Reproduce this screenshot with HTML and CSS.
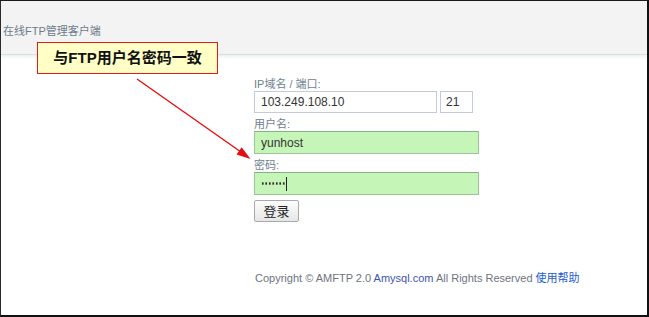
FILE: index.html
```html
<!DOCTYPE html>
<html lang="zh-CN">
<head>
    <meta charset="UTF-8">
    <meta name="viewport" content="width=device-width, initial-scale=1.0">
    <title>在线FTP管理客户端</title>
    <link rel="stylesheet" href="styles.css">
</head>
<body>
    <div class="frame">
        <div class="header">在线FTP管理客户端</div>

        <div class="login">
            <label class="field-label" for="host">IP域名 / 端口:</label>
            <div class="host-row">
                <input type="text" id="host" class="input input-host" value="103.249.108.10">
                <input type="text" id="port" class="input input-port" value="21">
            </div>
            <label class="field-label" for="user">用户名:</label>
            <input type="text" id="user" class="input input-fill" value="yunhost">
            <label class="field-label" for="pass">密码:</label>
            <div class="input input-fill input-pass"><span class="dots"></span><span class="caret"></span></div>
            <button class="btn-login">登录</button>
        </div>

        <div class="footer">
            Copyright © AMFTP 2.0 <a href="#">Amysql.com</a> All Rights Reserved <a href="#" class="help">使用帮助</a>
        </div>

        <!-- annotation -->
        <div class="callout">与FTP用户名密码一致</div>
        <svg class="arrow" width="649" height="317" viewBox="0 0 649 317">
            <line x1="137" y1="79" x2="241" y2="152" stroke="#e01010" stroke-width="1.4"/>
            <polygon points="250.5,159 236.5,154.6 241.7,147.2" fill="#e01010"/>
        </svg>
    </div>
</body>
</html>
```

FILE: styles.css
```css
* {
    box-sizing: border-box;
}

body {
    margin: 0;
    font-family: "Liberation Sans", Arial, "Noto Sans CJK SC", sans-serif;
    font-size: 12px;
    background-color: #fff;
}

.frame {
    position: relative;
    width: 649px;
    height: 317px;
    border-top: 1px solid #1a1a1a;
    border-left: 1px solid #2a2a2a;
    border-right: 2px solid #111;
    border-bottom: 2px solid #111;
    overflow: hidden;
}

.header {
    height: 54px;
    padding: 22px 0 0 2px;
    background-color: #f3f3f3;
    border-bottom: 1px solid #d6e2e0;
    box-shadow: 0 2px 3px rgba(210, 225, 222, 0.45);
    color: #6c7c8c;
    font-size: 11px;
    line-height: 16px;
}

.login {
    margin: 22px 0 0 253px;
    width: 226px;
}

.field-label {
    display: block;
    color: #6f7f8f;
    font-size: 11px;
    line-height: 14px;
    height: 14px;
}

.host-row {
    display: flex;
    gap: 3px;
    margin-bottom: 4px;
}

.input {
    display: block;
    height: 22px;
    padding: 0 6px;
    border: 1px solid #c3cadb;
    font-family: "Liberation Sans", Arial, sans-serif;
    font-size: 12px;
    color: #333;
    background-color: #fff;
    outline: none;
}

.input-host {
    width: 183px;
}

.input-port {
    width: 33px;
    padding: 0 5px;
}

.input-fill {
    width: 225px;
    height: 23px;
    margin-bottom: 4px;
    background-color: #c6f5b8;
    border: 1px solid #9cc49a;
    border-top-color: #86b186;
}

.input-pass {
    display: flex;
    align-items: center;
    margin-bottom: 5px;
}

.dots {
    width: 24px;
    height: 3px;
    background-image: radial-gradient(circle, #333 1px, transparent 1.3px);
    background-size: 3.5px 3px;
    background-repeat: repeat-x;
}

.caret {
    width: 1px;
    height: 14px;
    margin-left: 1px;
    background-color: #222;
}

.btn-login {
    display: block;
    width: 45px;
    height: 22px;
    padding: 0;
    border: 1px solid #a9a9a9;
    border-radius: 2px;
    background: linear-gradient(#fdfdfd, #e6e6e6);
    font-family: "Noto Sans CJK SC", sans-serif;
    font-size: 13px;
    line-height: 20px;
    color: #222;
}

.footer {
    margin: 48px 0 0 254px;
    color: #6d7380;
    font-size: 11px;
    line-height: 16px;
}

.footer a {
    color: #3d52b4;
    text-decoration: none;
}

.footer a.help {
    color: #1b5ad0;
}

.callout {
    position: absolute;
    left: 36px;
    top: 41px;
    width: 181px;
    height: 32px;
    border: 1px solid #e21a1a;
    background-color: #ffffc6;
    font-family: "Liberation Sans", Arial, "Noto Sans CJK SC", sans-serif;
    font-size: 15px;
    font-weight: bold;
    line-height: 29px;
    text-align: center;
    color: #111;
}

.arrow {
    position: absolute;
    left: -1px;
    top: -1px;
}
```
